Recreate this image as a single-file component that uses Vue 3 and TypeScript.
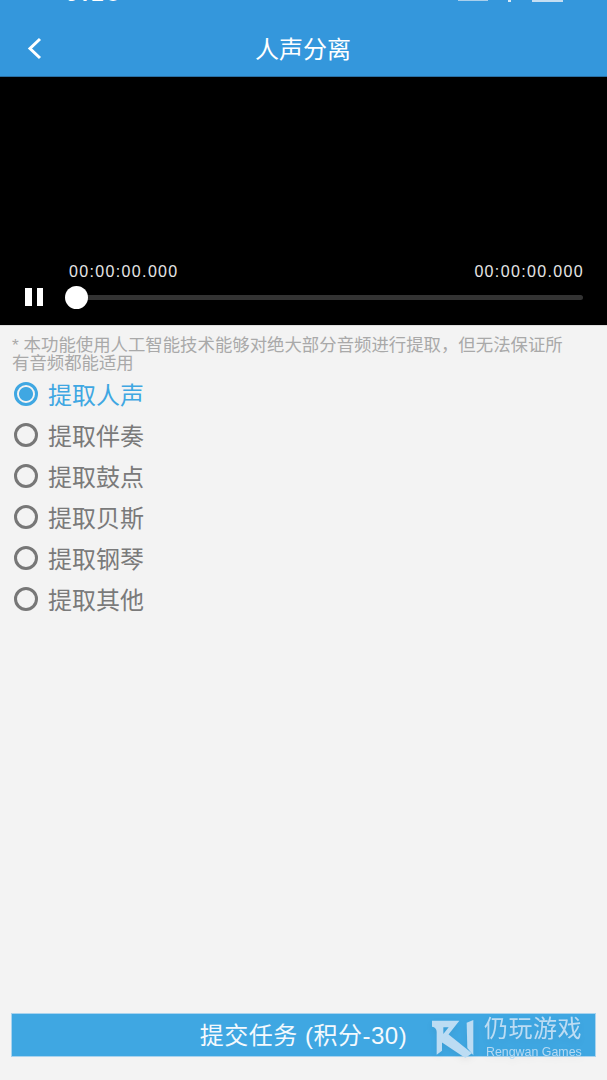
<template>
  <div class="page">
    <header class="top">
      <div class="status">
        <span class="clock">9:28</span>
        <span class="signal"></span>
        <span class="dot"></span>
        <span class="battery"></span>
      </div>
      <div class="nav">
        <svg class="back" width="20" height="24" viewBox="0 0 20 24">
          <path d="M15 3 L5 12.5 L15 22" fill="none" stroke="#fff" stroke-width="3" />
        </svg>
        <span class="title">人声分离</span>
      </div>
    </header>

    <section class="player">
      <div class="times">
        <span>00:00:00.000</span>
        <span>00:00:00.000</span>
      </div>
      <div class="controls">
        <div class="pause"><i></i><i></i></div>
        <div class="track"><div class="knob"></div></div>
      </div>
    </section>

    <main class="body">
      <p class="hint">* 本功能使用人工智能技术能够对绝大部分音频进行提取，但无法保证所有音频都能适用</p>
      <div class="options">
        <div
          v-for="(opt, i) in options"
          :key="opt"
          class="option"
          :class="{ active: i === selected }"
        >
          <span class="radio"></span>
          <span>{{ opt }}</span>
        </div>
      </div>
    </main>

    <footer class="foot">
      <button class="submit">提交任务 (积分-30)</button>
      <div class="mark">
        <svg width="56" height="52" viewBox="0 0 168 156">
          <path
            fill-rule="evenodd"
            d="M12 26 H94 L42 92 V116 L26 128 V60 Q26 46 12 44 Z M46 46 H62 L46 66 Z"
            fill="#bcdcf3"
          />
          <path d="M40 90 L60 66 L132 124 L112 138 Z" fill="#bcdcf3" />
          <path d="M116 32 L136 24 V130 L118 108 Z" fill="#bcdcf3" />
        </svg>
        <div class="mark-text">
          <span class="mark-cn">仍玩游戏</span>
          <span class="mark-en">Rengwan Games</span>
        </div>
      </div>
    </footer>
  </div>
</template>

<script setup lang="ts">
import { ref } from 'vue';

const options = ['提取人声', '提取伴奏', '提取鼓点', '提取贝斯', '提取钢琴', '提取其他'];
const selected = ref(0);
</script>

<style>
html,
body {
  margin: 0;
  background: #f3f3f3;
}
</style>

<style scoped>
.page {
  position: relative;
  width: 607px;
  height: 1080px;
  overflow: hidden;
  display: flex;
  flex-direction: column;
  background: #f3f3f3;
  font-family: "Liberation Sans", "Noto Sans CJK SC", sans-serif;
}

.top {
  height: 76px;
  flex: none;
  background: #3497dc;
  border-bottom: 1px solid #2a6fa3;
}

.status {
  height: 2px;
  overflow: hidden;
  display: flex;
  align-items: flex-start;
  padding: 0 44px 0 66px;
}

.clock {
  color: #fff;
  font-size: 22px;
  line-height: 22px;
  letter-spacing: 3px;
  font-weight: 700;
  margin-top: -18px;
  padding-top: 0.5px;
}

.signal {
  margin-left: auto;
  width: 30px;
  height: 1px;
  background: #a9cfec;
}

.dot {
  margin-left: 20px;
  width: 3px;
  height: 2px;
  background: #d8e9f6;
}

.battery {
  margin-left: 21px;
  width: 31px;
  height: 2px;
  background: #c5def2;
}

.nav {
  height: 74px;
  display: flex;
  align-items: center;
  justify-content: center;
  position: relative;
}

.back {
  position: absolute;
  left: 25px;
  top: 34px;
}

.title {
  padding-top: 22px;
  margin-right: 1px;
  color: #fff;
  font-size: 24px;
  line-height: 26px;
}

.player {
  height: 248px;
  flex: none;
  background: #000;
  display: flex;
  flex-direction: column;
  justify-content: flex-end;
  padding: 0 24px 18px 25px;
  box-sizing: border-box;
}

.times {
  display: flex;
  justify-content: space-between;
  padding-left: 44px;
  margin-right: -1px;
  color: #e6e6e6;
  font-size: 16px;
  letter-spacing: 1.35px;
  line-height: 20px;
  margin-bottom: 5px;
}

.controls {
  display: flex;
  align-items: center;
  height: 20px;
}

.pause {
  width: 41px;
  flex: none;
  display: flex;
  gap: 5px;
}

.pause i {
  display: block;
  width: 6.5px;
  height: 18px;
  background: #fff;
}

.track {
  flex: 1;
  height: 5px;
  border-radius: 3px;
  background: #333;
  position: relative;
}

.knob {
  position: absolute;
  left: -1px;
  top: -9px;
  width: 23px;
  height: 23px;
  border-radius: 50%;
  background: #fff;
}

.body {
  flex: 1;
  padding: 10px 12px 0;
  border-top: 1px solid #ddd;
}

.hint {
  margin: 0;
  width: 555px;
  color: #a9a9a9;
  font-size: 17.4px;
  line-height: 18px;
}

.options {
  margin-top: 1px;
}

.option {
  height: 41px;
  display: flex;
  align-items: center;
  gap: 10px;
  color: #7a7a7a;
  font-size: 24px;
}

.radio {
  width: 24px;
  height: 24px;
  margin-left: 2px;
  box-sizing: border-box;
  border: 3px solid #777;
  border-radius: 50%;
  background: transparent;
}

.option.active {
  color: #3fa7e2;
}

.option.active .radio {
  border-color: #3fa7e2;
  background: radial-gradient(circle, #3fa7e2 0 6.5px, transparent 7.5px);
}

.foot {
  flex: none;
  height: 67px;
  padding: 0 11px;
}

.submit {
  width: 585px;
  height: 44px;
  padding: 0 0 4px;
  border: 1px solid #a9d3ee;
  background: #3fa7e2;
  color: #f4f9fd;
  font: inherit;
  font-size: 24px;
  letter-spacing: 0.5px;
  display: block;
}

.mark {
  position: absolute;
  left: 428px;
  top: 1012px;
  display: flex;
  align-items: flex-start;
  filter: drop-shadow(0 3px 3px rgba(0, 0, 0, 0.05));
}

.mark-text {
  display: flex;
  flex-direction: column;
  margin-top: 3px;
}

.mark-cn {
  color: #bcdcf3;
  font-size: 24px;
  line-height: 28px;
  letter-spacing: 0.5px;
}

.mark-en {
  color: #b5d9f2;
  font-size: 12.4px;
  line-height: 16px;
  margin-top: 1px;
  margin-left: 2px;
}
</style>
